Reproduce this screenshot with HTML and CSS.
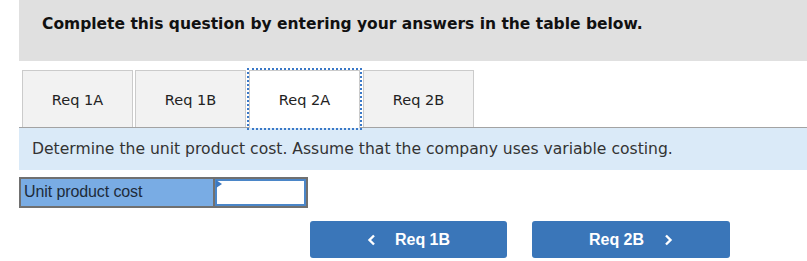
FILE: index.html
```html
<!DOCTYPE html>
<html>
<head>
<meta charset="utf-8">
<link rel="stylesheet" href="styles.css">
</head>
<body>
<div class="page">
  <div class="header">Complete this question by entering your answers in the table below.</div>
  <div class="tabs">
    <div class="tab">Req 1A</div>
    <div class="tab">Req 1B</div>
    <div class="tab active">Req 2A</div>
    <div class="tab">Req 2B</div>
  </div>
  <div class="prompt">Determine the unit product cost. Assume that the company uses variable costing.</div>
  <div class="answer">
    <div class="label">Unit product cost</div>
    <div class="input"><span class="flag"></span></div>
  </div>
  <div class="nav">
    <button class="btn"><svg class="chev" width="9" height="12" viewBox="0 0 9 12"><path d="M7 1.5 L2.5 6 L7 10.5" fill="none" stroke="#fff" stroke-width="2.4"/></svg><span>Req 1B</span></button>
    <button class="btn next"><span>Req 2B</span><svg class="chev" width="9" height="12" viewBox="0 0 9 12"><path d="M2 1.5 L6.5 6 L2 10.5" fill="none" stroke="#fff" stroke-width="2.4"/></svg></button>
  </div>
</div>
</body>
</html>
```
FILE: styles.css
```css
* { box-sizing: border-box; }
body { margin: 0; background: #fff; font-family: "DejaVu Sans", Verdana, sans-serif; }
.page { padding-left: 19px; }
.header {
  background: #e0e0e0;
  height: 61px;
  padding: 15px 0 0 23px;
  font-size: 15.5px;
  font-weight: bold;
  color: #111;
  line-height: 19px;
}
.tabs {
  margin-top: 9px;
  display: flex;
  gap: 2px;
  padding-left: 3px;
  border-bottom: 1px solid #a3a3a3;
  height: 58px;
}
.tab {
  width: 111px;
  height: 57px;
  background: #f2f2f2;
  border: 1px solid #cbcbcb;
  border-bottom: none;
  display: flex;
  align-items: center;
  justify-content: center;
  font-size: 14.5px;
  color: #222;
  padding-top: 1px;
}
.tab.active {
  background: #fff;
  margin: 0 1px;
  outline: 2px dotted #3a78c7;
  outline-offset: 0;
  height: 58px;
  padding-top: 0;
  padding-bottom: 0;
  position: relative;
  z-index: 1;
}
.prompt {
  background: #daeaf8;
  height: 42px;
  padding: 12px 0 0 13px;
  font-size: 15.6px;
  color: #333;
  line-height: 19px;
}
.answer {
  margin-top: 7px;
  display: flex;
  width: 289px;
  height: 31px;
  border: 2px solid #707070;
}
.label {
  width: 194px;
  background: #79ace4;
  border-right: 2px solid #707070;
  font-family: "Liberation Sans", Arial, sans-serif;
  font-size: 16px;
  color: #1d2b3a;
  padding: 4px 0 0 3px;
  letter-spacing: -0.1px;
}
.input {
  flex: 1;
  background: #fff;
  border: 2px solid #4b86c8;
  position: relative;
}
.flag {
  position: absolute;
  left: -1px;
  top: -1px;
  width: 0;
  height: 0;
  border-top: 4px solid transparent;
  border-bottom: 4px solid transparent;
  border-left: 6px solid #3c78c0;
}
.nav {
  margin-top: 13px;
  padding-left: 291px;
  display: flex;
  gap: 25px;
}
.btn {
  width: 197px;
  height: 37px;
  background: #3a76b9;
  border: none;
  border-radius: 3px;
  color: #fff;
  font-family: "Liberation Sans", Arial, sans-serif;
  font-weight: bold;
  font-size: 16px;
  display: flex;
  align-items: center;
  justify-content: center;
  gap: 19px;
  padding: 0;
}
.btn.next { gap: 20px; width: 198px; }
.chev { display: block; }
```
